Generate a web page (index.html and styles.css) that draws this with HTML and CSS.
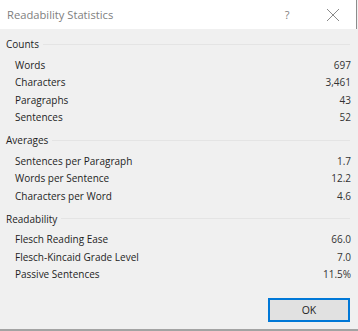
FILE: index.html
```html
<!DOCTYPE html>
<html lang="en">
<head>
    <meta charset="UTF-8">
    <title>Readability Statistics</title>
    <link rel="stylesheet" href="styles.css">
</head>
<body>
    <div class="dialog">
        <div class="titlebar">
            <span class="title">Readability Statistics</span>
            <span class="help">?</span>
            <span class="close">
                <svg width="14" height="14" viewBox="0 0 14 14">
                    <path d="M1 1 L13 13 M13 1 L1 13" stroke="#8a8a8a" stroke-width="1" fill="none"/>
                </svg>
            </span>
        </div>

        <div class="content">
            <div class="section">
                <div class="heading"><span>Counts</span></div>
                <div class="row"><span>Words</span><span>697</span></div>
                <div class="row"><span>Characters</span><span>3,461</span></div>
                <div class="row"><span>Paragraphs</span><span>43</span></div>
                <div class="row"><span>Sentences</span><span>52</span></div>
            </div>
            <div class="section">
                <div class="heading"><span>Averages</span></div>
                <div class="row"><span>Sentences per Paragraph</span><span>1.7</span></div>
                <div class="row"><span>Words per Sentence</span><span>12.2</span></div>
                <div class="row"><span>Characters per Word</span><span>4.6</span></div>
            </div>
            <div class="section">
                <div class="heading"><span>Readability</span></div>
                <div class="row"><span>Flesch Reading Ease</span><span>66.0</span></div>
                <div class="row"><span>Flesch-Kincaid Grade Level</span><span>7.0</span></div>
                <div class="row"><span>Passive Sentences</span><span>11.5%</span></div>
            </div>
        </div>

        <div class="footer">
            <button type="button">OK</button>
        </div>
    </div>
</body>
</html>
```

FILE: styles.css
```css
body {
    margin: 0;
    font-family: "Open Sans", Arial, sans-serif;
    font-size: 10px;
    color: #1e1e1e;
}
.dialog {
    width: 358px;
    height: 331px;
    box-sizing: border-box;
    background-color: #f0f0f0;
    border-bottom: 2px solid #a3a3a3;
    display: flex;
    flex-direction: column;
}
.titlebar {
    height: 29px;
    flex-shrink: 0;
    background-color: white;
    border-right: 1px solid #8c8c8c;
    margin-right: 1px;
    display: flex;
    align-items: center;
    padding-left: 7px;
}
.title {
    font-size: 11.2px;
    color: #808080;
    flex: 1;
}
.help {
    font-size: 11px;
    color: #808080;
    width: 46px;
    text-align: center;
}
.close {
    width: 46px;
    height: 29px;
    display: flex;
    align-items: center;
    justify-content: center;
}
.content {
    padding: 5px 7px 0 6px;
}
.section {
    margin-bottom: 4px;
}
.heading {
    height: 20px;
    display: flex;
    align-items: center;
    margin-bottom: 2px;
}
.heading::after {
    content: "";
    flex: 1;
    height: 1px;
    background-color: #e4e4e4;
    margin-left: 4px;
    margin-right: 1px;
}
.row {
    height: 17.5px;
    display: flex;
    align-items: center;
    justify-content: space-between;
    padding-left: 9px;
}
.row span:last-child {
    color: #333;
}
.footer {
    margin-top: auto;
    display: flex;
    justify-content: flex-end;
    padding: 0 8px 7px 0;
}
button {
    width: 82px;
    height: 24px;
    background-color: #e1e1e1;
    border: 1px solid #0078d7;
    box-shadow: inset 0 0 0 1px #0078d7;
    font-family: "Open Sans", Arial, sans-serif;
    font-size: 10.5px;
    color: #1e1e1e;
    padding: 0;
}
```
